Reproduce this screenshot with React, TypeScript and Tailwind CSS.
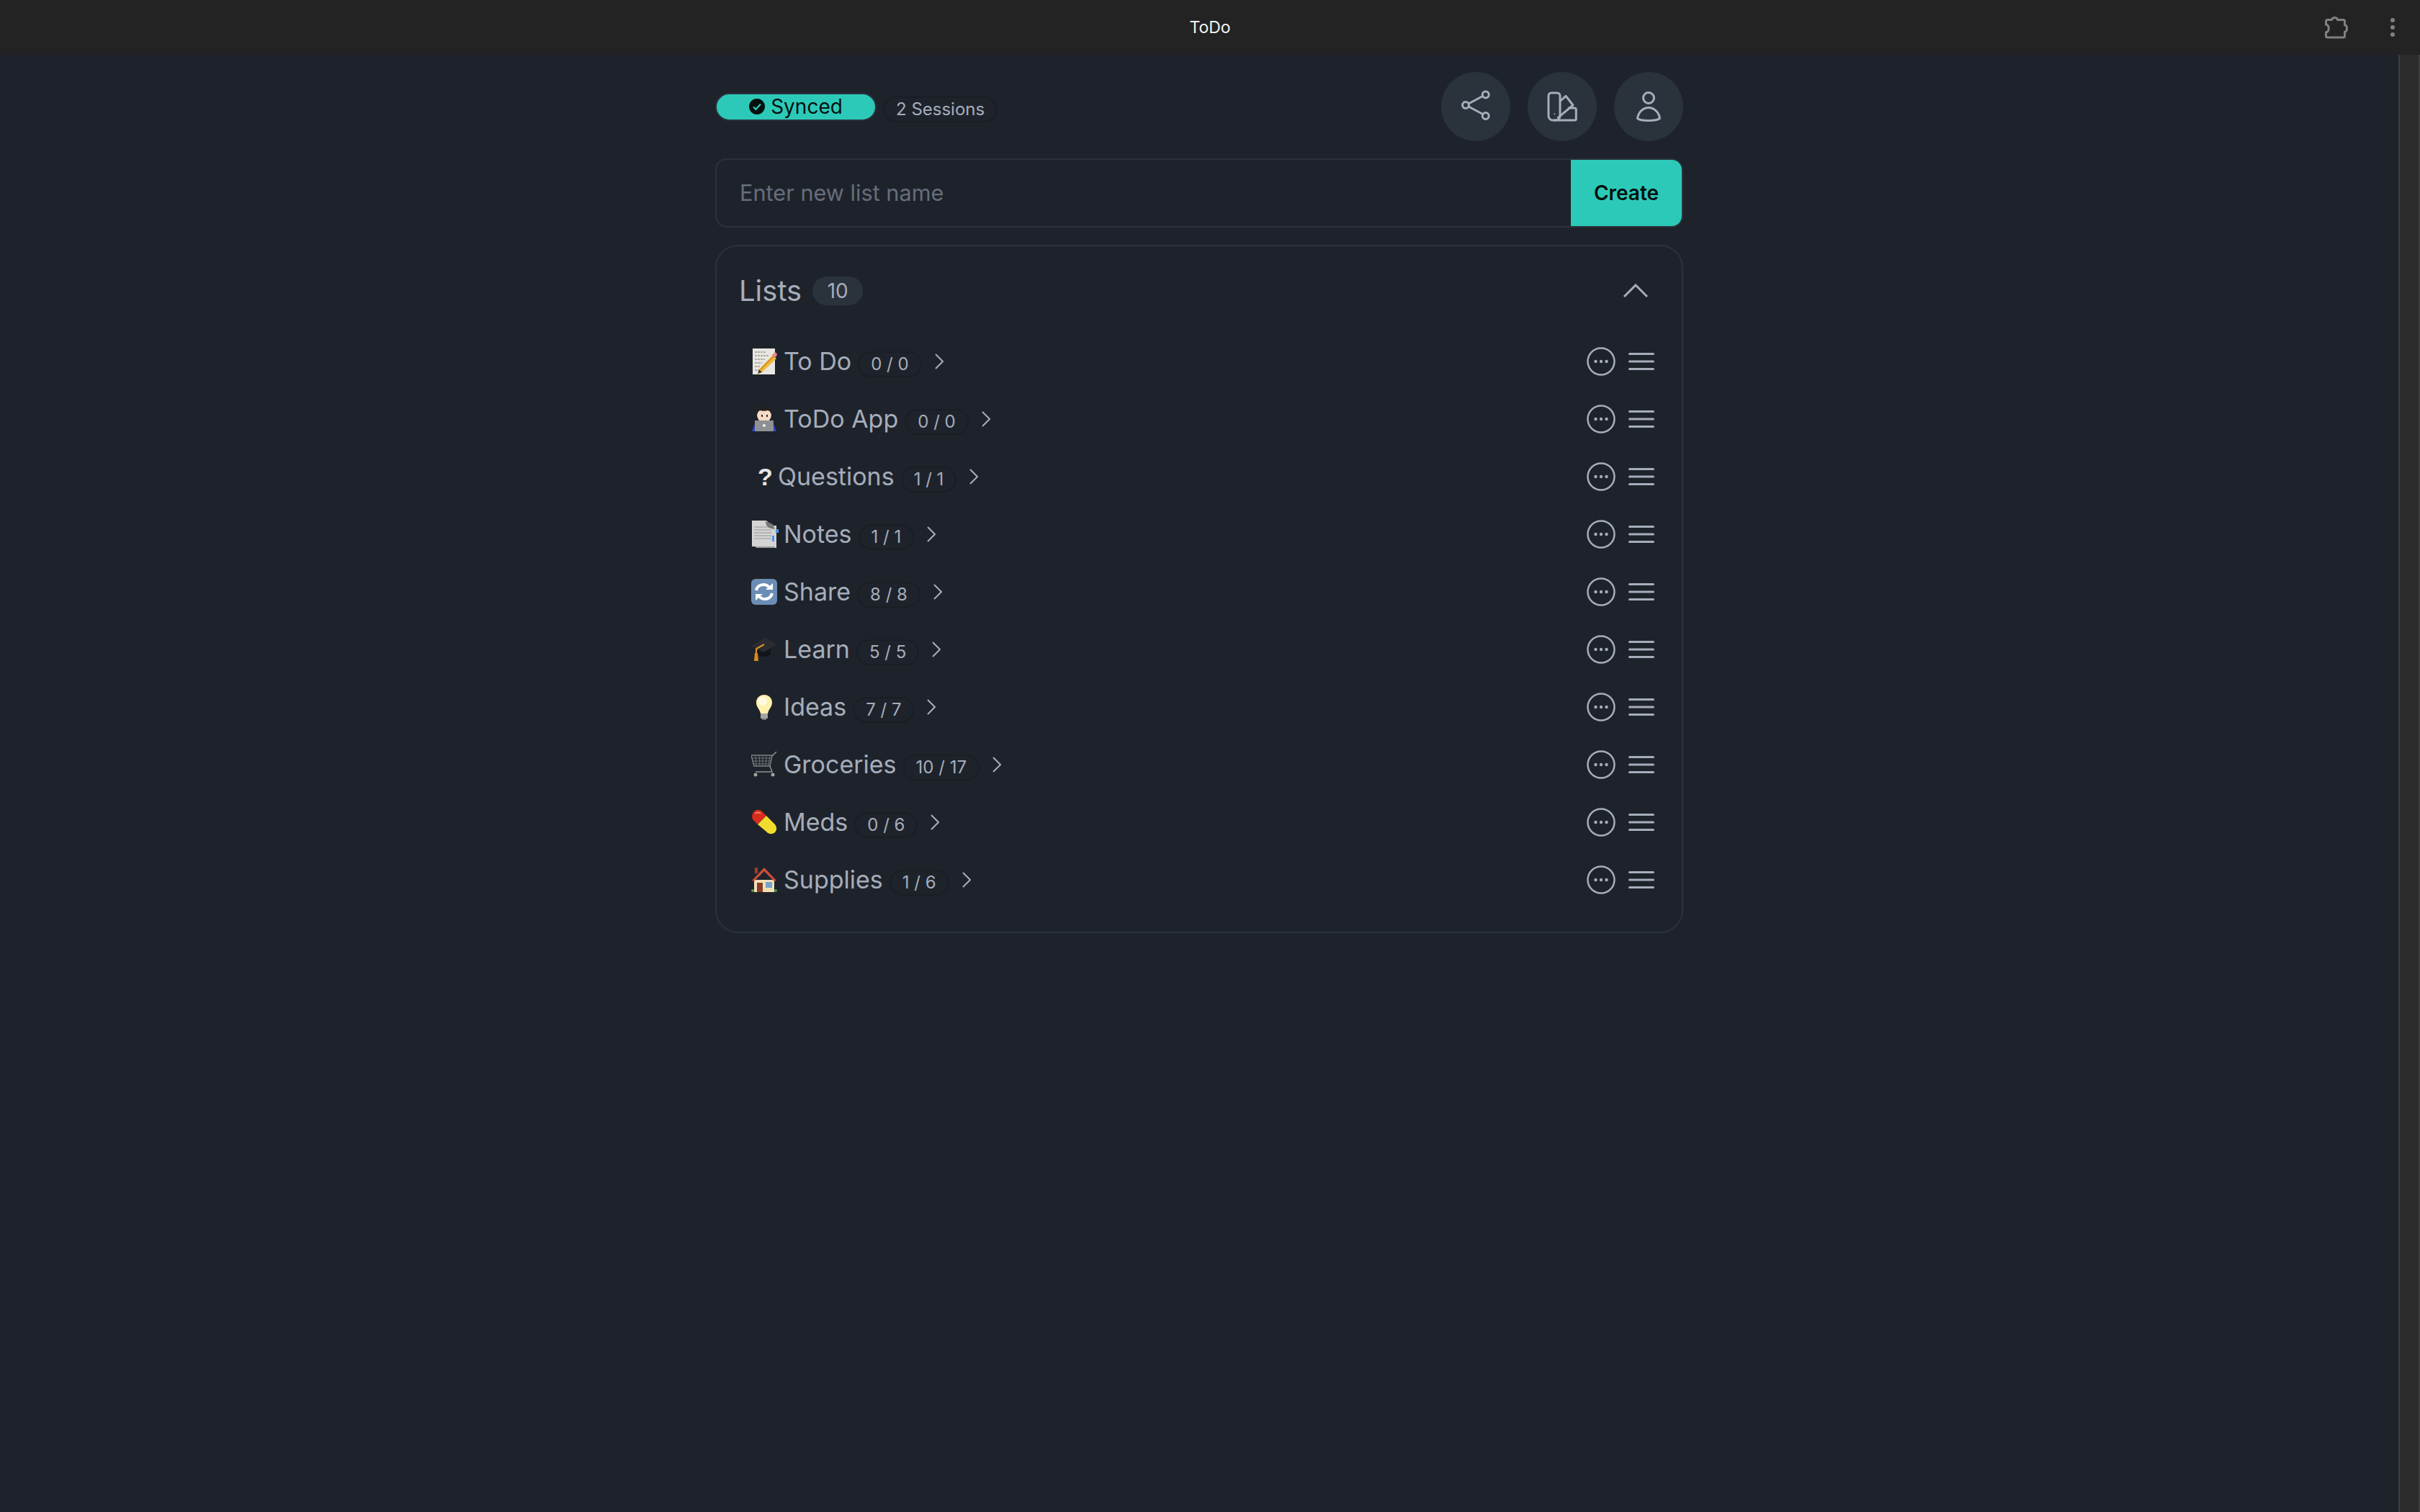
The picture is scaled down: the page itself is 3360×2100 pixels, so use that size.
import React from "react";

const MemoEmoji = () => (
  <svg width="36" height="36" viewBox="0 0 36 36">
    <rect x="2" y="0" width="31" height="36" fill="#e9e7e1" />
    <path d="M5 5h16M5 10h20M5 15h14M5 20h10M5 25h8M5 30h9" stroke="#77736b" strokeWidth="1" strokeDasharray="3 1" />
    <path d="M11 29l19-20 5 5-20 19-6 2z" fill="#efb93a" />
    <path d="M29 9l3-3c1-1 3 0 3.500 1s.5 2.500-.5 3.500l-3 3z" fill="#e8868a" />
    <path d="M11 29l4 4-6 2z" fill="#4a3a2a" />
    <path d="M13 29l18-18" stroke="#c98a1e" strokeWidth="1.500" />
  </svg>
);

const TechnologistEmoji = () => (
  <svg width="36" height="36" viewBox="0 0 36 36">
    <path d="M1 35l4-10h26l4 10z" fill="#2a47c9" />
    <ellipse cx="18" cy="12" rx="10" ry="11" fill="#f6dcc6" />
    <path d="M8 12C7 3 13 0 18 0s11 3 10 12c-1-4-3-6-5-6-3 1-8 1-11 0-2 1-3 3-4 6z" fill="#23201f" />
    <rect x="14" y="12" width="2" height="3" fill="#3a2a22" />
    <rect x="21" y="12" width="2" height="3" fill="#3a2a22" />
    <rect x="5" y="20" width="26" height="15" rx="1" fill="#8f9094" />
    <circle cx="18" cy="27" r="2" fill="#f3f3f3" />
  </svg>
);

const NotesEmoji = () => (
  <svg width="38" height="38" viewBox="0 0 38 38">
    <path d="M1 0h20l8 7h6v31H7l-1-2H1z" fill="#d4d4d4" />
    <path d="M4 9h22M4 13h24M4 17h24M4 21h24M4 25h24" stroke="#aaa" strokeWidth="1.500" />
    <path d="M20 1c0 6 3 10 13 11l-3-7z" fill="#777" />
    <rect x="34" y="12" width="4" height="5" fill="#4f93ea" />
    <rect x="29" y="21" width="3" height="8" fill="#4f93ea" />
    <path d="M7 36h26v2H7z" fill="#9a9a9a" />
  </svg>
);

const ShareEmoji = () => (
  <svg width="36" height="36" viewBox="0 0 36 36">
    <rect width="36" height="36" rx="6" fill="#6b8db5" />
    <path d="M7 16c1-5 5-8 10-8 3 0 6 1 8 4" fill="none" stroke="#fff" strokeWidth="4" />
    <path d="M29 20c-1 5-5 8-10 8-3 0-6-1-8-4" fill="none" stroke="#fff" strokeWidth="4" />
    <path d="M20 15h10V6z" fill="#fff" />
    <path d="M16 21H6v9z" fill="#fff" />
  </svg>
);

const LearnEmoji = () => (
  <svg width="36" height="36" viewBox="0 0 36 36">
    <path d="M9 16v9c4 4 14 4 18 0v-9z" fill="#14151a" />
    <path d="M0 13L19 2l17 9-19 11z" fill="#2b2c31" />
    <path d="M18 11L7 17v8" fill="none" stroke="#e0951f" strokeWidth="2" />
    <path d="M5 23h4l1 11H4z" fill="#d98a1d" />
  </svg>
);

const IdeasEmoji = () => (
  <svg width="36" height="36" viewBox="0 0 36 36">
    <path d="M18 1c6 0 11 4 11 11 0 6-5 9-6 15H13c-1-6-6-9-6-15C7 5 12 1 18 1z" fill="#fff1ad" />
    <ellipse cx="16" cy="10" rx="6" ry="6" fill="#fffbe3" />
    <rect x="13" y="27" width="10" height="7" rx="1" fill="#a4a4a2" />
    <rect x="15" y="34" width="6" height="2" fill="#6f6f6d" />
  </svg>
);

const CartEmoji = () => (
  <svg width="36" height="36" viewBox="0 0 36 36">
    <path d="M0 5h29l-3 15H4z" fill="none" stroke="#7c7f84" strokeWidth="1.500" />
    <path d="M1 9h27M2 13h25M3 17h23M6 5l1 15M11 5l1 15M16 5v15M21 5l-1 15M26 5l-2 15" stroke="#6d7075" strokeWidth="1" />
    <path d="M29 6l6-6M26 20l3 8H6" fill="none" stroke="#8d9095" strokeWidth="1.500" />
    <circle cx="6" cy="32" r="2.500" fill="#a2a099" />
    <circle cx="30" cy="32" r="2.500" fill="#a2a099" />
  </svg>
);

const MedsEmoji = () => (
  <svg width="36" height="36" viewBox="0 0 36 36">
    <path d="M4 3c3-3 8-3 11 0l6 6L9 21 3 15C0 12 1 6 4 3z" fill="#d92c1c" />
    <path d="M21 9l11 11c4 4 4 9 1 12s-9 3-12-1L9 21z" fill="#f0dc2f" />
    <path d="M6 6c2-2 5-2 7 0" fill="none" stroke="#f08a7a" strokeWidth="2" />
  </svg>
);

const SuppliesEmoji = () => (
  <svg width="36" height="36" viewBox="0 0 36 36">
    <rect x="5" y="1" width="4" height="8" fill="#a8392a" />
    <path d="M4 18h28v17H4z" fill="#f3dfb4" />
    <path d="M18 1L1 19l3 1L18 6l14 14 3-1z" fill="#cf4d36" />
    <rect x="8" y="22" width="8" height="13" fill="#8a3b2a" />
    <rect x="20" y="21" width="9" height="8" fill="#74a5cf" />
    <circle cx="2" cy="33" r="2" fill="#4f9a45" />
    <circle cx="34" cy="33" r="2" fill="#4f9a45" />
  </svg>
);

const QuestionEmoji = () => (
  <span className="w-[37px] pl-[9px] text-[34px] font-bold leading-none text-[#e7e7e7] font-['Liberation_Sans',sans-serif]">?</span>
);

const lists = [
  { name: "To Do", count: "0 / 0", icon: <MemoEmoji /> },
  { name: "ToDo App", count: "0 / 0", icon: <TechnologistEmoji /> },
  { name: "Questions", count: "1 / 1", icon: null },
  { name: "Notes", count: "1 / 1", icon: <NotesEmoji /> },
  { name: "Share", count: "8 / 8", icon: <ShareEmoji /> },
  { name: "Learn", count: "5 / 5", icon: <LearnEmoji /> },
  { name: "Ideas", count: "7 / 7", icon: <IdeasEmoji /> },
  { name: "Groceries", count: "10 / 17", icon: <CartEmoji /> },
  { name: "Meds", count: "0 / 6", icon: <MedsEmoji /> },
  { name: "Supplies", count: "1 / 6", icon: <SuppliesEmoji /> },
];

const TitleBar = () => (
  <div className="h-[76px] shrink-0 grid grid-cols-3 items-center bg-[#232323]">
    <div />
    <span className="text-center text-[23px] text-[#f2f2f2]">ToDo</span>
    <div className="flex items-center justify-end gap-[57px] pr-[35px]">
      <svg width="36" height="36" viewBox="0 0 36 36" fill="none" stroke="#808080" strokeWidth="3">
        <path d="M5.500 7.500H11.500C12.500 3.500 18.500 3.500 19.500 7.500H27.500a2 2 0 0 1 2 2V14.500C33.500 15.500 33.500 23.500 29.500 24.500V30a2 2 0 0 1-2 2H5.500a2 2 0 0 1-2-2V25C8.500 24 8.500 15 3.500 14V9.500a2 2 0 0 1 2-2Z" />
      </svg>
      <svg width="6" height="26" viewBox="0 0 6 26" fill="#808080">
        <circle cx="3" cy="3" r="3" />
        <circle cx="3" cy="13" r="3" />
        <circle cx="3" cy="23" r="3" />
      </svg>
    </div>
  </div>
);

const IconButton = ({ children }: { children: React.ReactNode }) => (
  <button className="w-[96px] h-[96px] rounded-full bg-[#2a323c] flex items-center justify-center">
    <svg width="48" height="48" viewBox="0 0 48 48" fill="none" stroke="#a6adbb" strokeWidth="3" strokeLinecap="round" strokeLinejoin="round">
      {children}
    </svg>
  </button>
);

const ListRow = ({ name, count, icon }: { name: string; count: string; icon: React.ReactNode }) => (
  <div className="h-[80px] flex items-center justify-between pl-[48px] pr-[38px]">
    <div className="flex items-center">
      {icon ? <span className="w-[45px] flex items-center">{icon}</span> : <QuestionEmoji />}
      <span className="text-[34px] leading-none text-[#a6adbb]">{name}</span>
      <span className="ml-[9px] mt-[8px] h-[36px] px-[16px] flex items-center rounded-full border-2 border-[#191e24] text-[24px] text-[#a6adbb] whitespace-pre">
        {count}
      </span>
      <svg className="ml-[18px]" width="12" height="22" viewBox="0 0 12 22" fill="none" stroke="#a6adbb" strokeWidth="2">
        <path d="M1 1l10 10L1 21" />
      </svg>
    </div>
    <div className="flex items-center gap-[18px]">
      <svg width="40" height="40" viewBox="0 0 40 40" fill="none" stroke="#a6adbb" strokeWidth="2.500">
        <circle cx="20" cy="20" r="18.500" />
        <circle cx="12.500" cy="20" r="2.200" fill="#a6adbb" stroke="none" />
        <circle cx="20" cy="20" r="2.200" fill="#a6adbb" stroke="none" />
        <circle cx="27.500" cy="20" r="2.200" fill="#a6adbb" stroke="none" />
      </svg>
      <svg width="36" height="26" viewBox="0 0 36 26" fill="none" stroke="#a6adbb" strokeWidth="3" strokeLinecap="round">
        <path d="M1.500 2.500h33M1.500 13h33M1.500 23.500h33" />
      </svg>
    </div>
  </div>
);

export default function App() {
  return (
    <div className="h-screen flex flex-col overflow-hidden bg-[#1e232b] font-['Inter',sans-serif]">
      <TitleBar />
      <div className="flex-1 flex min-h-0">
        <main className="flex-1">
          <div className="w-[1344px] mx-auto pt-[24px] flex flex-col gap-[24px]">
            {/* Status and actions */}
            <div className="flex items-center justify-between">
              <div className="flex items-end gap-[9px]">
                <div className="w-[224px] h-[39px] rounded-full bg-[#2dc9b8] border-2 border-[#2a323c] flex items-center justify-center gap-[8px] text-[28px] text-[#04100e]">
                  <svg width="22" height="22" viewBox="0 0 20 20">
                    <circle cx="10" cy="10" r="10" fill="#04100e" />
                    <path d="M5.500 10.500l3 3 6-6.500" fill="none" stroke="#2dc9b8" strokeWidth="2" />
                  </svg>
                  Synced
                </div>
                <div className="h-[36px] px-[16px] -mb-[2px] flex items-center rounded-full border-2 border-[#191e24] text-[24px] text-[#a6adbb]">
                  2 Sessions
                </div>
              </div>
              <div className="flex gap-[24px]">
                <IconButton>
                  <circle cx="37.700" cy="7.500" r="4.500" />
                  <circle cx="10" cy="22" r="4.500" />
                  <circle cx="37.700" cy="37" r="4.500" />
                  <path d="M14 20l19.700-10.500M14 24l19.700 10.500" />
                </IconButton>
                <IconButton>
                  <path d="M9 5h8a4 4 0 0 1 4 4v28a6 6 0 0 1-6 6h-4a6 6 0 0 1-6-6V9a4 4 0 0 1 4-4Z" />
                  <path d="M21.700 16L29 9.300l10 12.700-20.700 17.300" />
                  <path d="M33.300 26h8a2 2 0 0 1 2 2v13a2 2 0 0 1-2 2H13.300" />
                  <circle cx="13.300" cy="34.300" r="1" fill="#a6adbb" stroke="none" />
                </IconButton>
                <IconButton>
                  <circle cx="24" cy="12" r="7.500" />
                  <path d="M8.500 40.500C10 31 17 25.500 24 25.500S38 31 39.500 40.500C34 44.500 14 44.500 8.500 40.500Z" />
                </IconButton>
              </div>
            </div>

            {/* New list form */}
            <div className="h-[96px] flex rounded-[16px] border-2 border-[#2a323c] overflow-hidden">
              <input
                className="flex-1 min-w-0 pl-[32px] bg-transparent text-[30.700px] outline-none placeholder:text-[#666d7b]"
                placeholder="Enter new list name"
              />
              <button className="w-[154px] bg-[#2dc9b8] text-[28px] font-semibold text-[#04100e]">Create</button>
            </div>

            {/* Lists */}
            <section className="h-[956px] rounded-[32px] border-2 border-[#2a323c]">
              <div className="h-[120px] pt-[4px] flex items-center justify-between pl-[31px] pr-[46px]">
                <div className="flex items-center gap-[15px]">
                  <span className="text-[40px] text-[#a6adbb]">Lists</span>
                  <span className="w-[70px] h-[40px] rounded-full bg-[#2a323c] flex items-center justify-center text-[28px] text-[#a6adbb]">10</span>
                </div>
                <svg width="36" height="20" viewBox="0 0 36 20" fill="none" stroke="#a6adbb" strokeWidth="3">
                  <path d="M2 18L18 2l16 16" />
                </svg>
              </div>
              {lists.map((list) => (
                <ListRow key={list.name} name={list.name} count={list.count} icon={list.icon} />
              ))}
            </section>
          </div>
        </main>

        {/* Scrollbar track */}
        <div className="w-[30px] shrink-0 bg-[#2c2c2c] border-x-2 border-[#3f3f3f]" />
      </div>
    </div>
  );
}
